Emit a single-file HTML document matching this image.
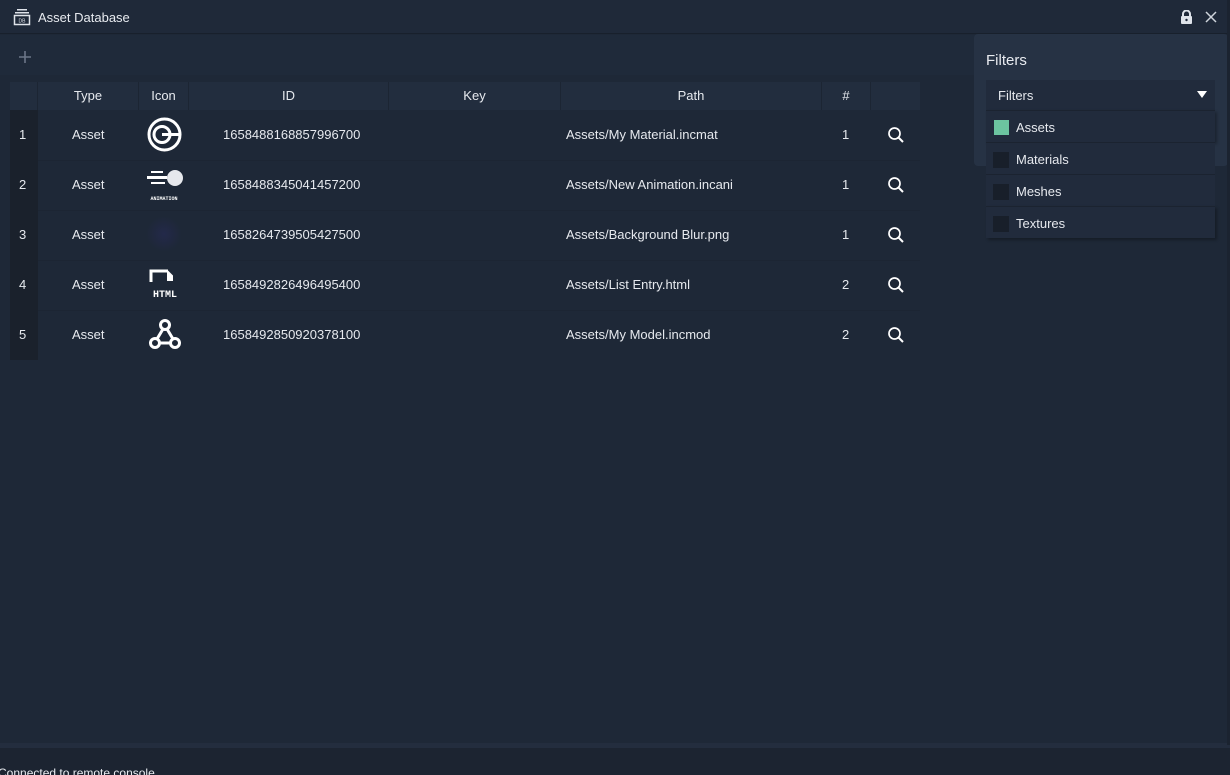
<!DOCTYPE html>
<html style="overflow:hidden;width:1230px;height:775px"><head><meta charset="utf-8"><style>
*{margin:0;padding:0;box-sizing:border-box}
body{width:1230px;height:775px;background:#1e2837;font-family:"Liberation Sans",sans-serif;color:#e6e9ee;font-size:13px;position:relative;overflow:hidden}
.title{position:absolute;left:0;top:0;width:1230px;height:34px;background:#1f2939;border-bottom:1px solid #18202c}
.title span{position:absolute;left:38px;top:10px;font-size:13px;color:#e8ebf0}
.tool{position:absolute;left:0;top:35px;width:1230px;height:40px;background:#1f2a3a}
.table{position:absolute;left:10px;top:82px}
.hdr{position:absolute;top:0;height:28px;background:#222d3e;text-align:center;line-height:28px;font-size:13px;border-right:1px solid #1c2533}
.idx{position:absolute;left:0;top:28px;width:28px;height:250px;background:#1a212c}
.cell{position:absolute;font-size:13px;line-height:16px}
.rowline{position:absolute;left:28px;width:882px;height:1px;background:#1c2533}
.panel{position:absolute;left:974px;top:34px;width:254px;height:132px;background:#263244;border-radius:4px}
.dd{position:absolute;left:986px;top:80px;width:229px;height:30px;background:#212b3c}
.opt{position:absolute;left:986px;width:229px;height:32px;background:#212b3c;border-top:1px solid #1b2330}
.opt .cb{position:absolute;left:7px;top:9px;width:16px;height:16px;background:#181f2a}
.opt span{position:absolute;left:30px;top:9px;font-size:13px}
</style></head><body>
<div class="title">
<svg style="position:absolute;left:13px;top:8px" width="18" height="18" viewBox="0 0 18 18"><rect x="4" y="1" width="10" height="1.5" fill="#dfe3ea"/><rect x="2" y="4" width="14" height="1.5" fill="#dfe3ea"/><rect x="1.5" y="7.5" width="15" height="9" fill="none" stroke="#dfe3ea" stroke-width="1.5"/><text x="9" y="14.5" font-size="5" fill="#dfe3ea" text-anchor="middle" font-family="Liberation Sans">DB</text></svg>
<span>Asset Database</span>
<svg style="position:absolute;left:1180px;top:10px" width="13" height="14" viewBox="0 0 13 14"><path d="M3 6V4a3.5 3.5 0 0 1 7 0v2" fill="none" stroke="#dfe3ea" stroke-width="2"/><rect x="1" y="6" width="11" height="8" rx="1" fill="#dfe3ea"/><circle cx="6.5" cy="10" r="1.2" fill="#1f2939"/></svg>
<svg style="position:absolute;left:1205px;top:11px" width="12" height="12" viewBox="0 0 12 12"><path d="M1 1L11 11M11 1L1 11" stroke="#cfd4dc" stroke-width="1.5"/></svg>
</div>
<div class="tool"><svg style="position:absolute;left:18px;top:15px" width="14" height="14"><path d="M7 1V13M1 7H13" stroke="#6b7688" stroke-width="1.6"/></svg></div>
<div class="table">
<div class="hdr" style="left:0;width:28px"></div>
<div class="hdr" style="left:28px;width:101px">Type</div>
<div class="hdr" style="left:129px;width:50px">Icon</div>
<div class="hdr" style="left:179px;width:200px">ID</div>
<div class="hdr" style="left:379px;width:172px">Key</div>
<div class="hdr" style="left:551px;width:261px">Path</div>
<div class="hdr" style="left:812px;width:49px">#</div>
<div class="hdr" style="left:861px;width:49px;border-right:none"></div>
<div class="idx"></div>
<div class="rowline" style="top:78px"></div><div class="rowline" style="top:128px"></div><div class="rowline" style="top:178px"></div><div class="rowline" style="top:228px"></div>
</div>
<div class="cell" style="left:19px;top:127px">1</div><div class="cell" style="left:72px;top:127px">Asset</div><div class="cell" style="left:223px;top:127px">1658488168857996700</div><div class="cell" style="left:566px;top:127px">Assets/My Material.incmat</div><div class="cell" style="left:842px;top:127px">1</div>
<div class="cell" style="left:19px;top:177px">2</div><div class="cell" style="left:72px;top:177px">Asset</div><div class="cell" style="left:223px;top:177px">1658488345041457200</div><div class="cell" style="left:566px;top:177px">Assets/New Animation.incani</div><div class="cell" style="left:842px;top:177px">1</div>
<div class="cell" style="left:19px;top:227px">3</div><div class="cell" style="left:72px;top:227px">Asset</div><div class="cell" style="left:223px;top:227px">1658264739505427500</div><div class="cell" style="left:566px;top:227px">Assets/Background Blur.png</div><div class="cell" style="left:842px;top:227px">1</div>
<div class="cell" style="left:19px;top:277px">4</div><div class="cell" style="left:72px;top:277px">Asset</div><div class="cell" style="left:223px;top:277px">1658492826496495400</div><div class="cell" style="left:566px;top:277px">Assets/List Entry.html</div><div class="cell" style="left:842px;top:277px">2</div>
<div class="cell" style="left:19px;top:327px">5</div><div class="cell" style="left:72px;top:327px">Asset</div><div class="cell" style="left:223px;top:327px">1658492850920378100</div><div class="cell" style="left:566px;top:327px">Assets/My Model.incmod</div><div class="cell" style="left:842px;top:327px">2</div>
<svg style="position:absolute;left:147px;top:117px" width="36" height="36" viewBox="0 0 36 36"><circle cx="17.5" cy="17.5" r="15.5" fill="none" stroke="#fff" stroke-width="3"/><circle cx="15" cy="17.5" r="8" fill="none" stroke="#fff" stroke-width="3"/><path d="M15 17.5H32" stroke="#fff" stroke-width="3"/><rect x="13" y="12" width="4" height="4" fill="#1e2837"/></svg>
<svg style="position:absolute;left:145px;top:168px" width="40" height="34" viewBox="0 0 40 34"><rect x="6" y="3" width="12" height="2" fill="#fff"/><rect x="2" y="8" width="20" height="3" fill="#fff"/><rect x="6" y="14" width="14" height="2" fill="#fff"/><circle cx="30" cy="10" r="8" fill="#e6e8ec"/><text x="19" y="32" font-size="5" fill="#fff" text-anchor="middle" font-family="Liberation Mono" font-weight="bold">ANIMATION</text></svg>
<div style="position:absolute;left:146px;top:216px;width:36px;height:36px;border-radius:50%;background:radial-gradient(#23294a,#1e2837 70%)"></div>
<svg style="position:absolute;left:148px;top:268px" width="36" height="34" viewBox="0 0 36 34"><path d="M3 14V3H20" fill="none" stroke="#fff" stroke-width="3"/><path d="M19 1.5L25 7.5V13H19Z" fill="#fff"/><text x="17" y="29" font-size="10" fill="#fff" text-anchor="middle" font-family="Liberation Mono" font-weight="bold">HTML</text></svg>
<svg style="position:absolute;left:148px;top:318px" width="34" height="34" viewBox="0 0 34 34"><circle cx="17" cy="7" r="4.5" fill="none" stroke="#fff" stroke-width="3"/><circle cx="7" cy="25" r="4.5" fill="none" stroke="#fff" stroke-width="3"/><circle cx="27" cy="25" r="4.5" fill="none" stroke="#fff" stroke-width="3"/><path d="M15 11L9 21M19 11L25 21M11.5 25H22.5" stroke="#fff" stroke-width="3"/></svg>
<svg style="position:absolute;left:887px;top:126px" width="18" height="18" viewBox="0 0 18 18"><circle cx="7.5" cy="7.5" r="5.5" fill="none" stroke="#fff" stroke-width="1.7"/><path d="M11.5 11.5L16 16" stroke="#fff" stroke-width="2"/></svg>
<svg style="position:absolute;left:887px;top:176px" width="18" height="18" viewBox="0 0 18 18"><circle cx="7.5" cy="7.5" r="5.5" fill="none" stroke="#fff" stroke-width="1.7"/><path d="M11.5 11.5L16 16" stroke="#fff" stroke-width="2"/></svg>
<svg style="position:absolute;left:887px;top:226px" width="18" height="18" viewBox="0 0 18 18"><circle cx="7.5" cy="7.5" r="5.5" fill="none" stroke="#fff" stroke-width="1.7"/><path d="M11.5 11.5L16 16" stroke="#fff" stroke-width="2"/></svg>
<svg style="position:absolute;left:887px;top:276px" width="18" height="18" viewBox="0 0 18 18"><circle cx="7.5" cy="7.5" r="5.5" fill="none" stroke="#fff" stroke-width="1.7"/><path d="M11.5 11.5L16 16" stroke="#fff" stroke-width="2"/></svg>
<svg style="position:absolute;left:887px;top:326px" width="18" height="18" viewBox="0 0 18 18"><circle cx="7.5" cy="7.5" r="5.5" fill="none" stroke="#fff" stroke-width="1.7"/><path d="M11.5 11.5L16 16" stroke="#fff" stroke-width="2"/></svg>
<div class="panel"></div>
<div style="position:absolute;left:986px;top:52px;font-size:15px;color:#e8ebf0">Filters</div>
<div class="dd"><span style="position:absolute;left:12px;top:8px;font-size:13px">Filters</span><svg style="position:absolute;left:211px;top:11px" width="10" height="8"><path d="M0 0H10L5 7Z" fill="#fff"/></svg></div>
<div class="opt" style="top:110px;box-shadow:2px 2px 3px rgba(0,0,0,.3)"><div class="cb" style="background:#6cc4a0;left:8px;top:9px;width:15px;height:15px"></div><span>Assets</span></div>
<div class="opt" style="top:142px"><div class="cb"></div><span>Materials</span></div>
<div class="opt" style="top:174px"><div class="cb"></div><span>Meshes</span></div>
<div class="opt" style="top:206px;box-shadow:2px 2px 3px rgba(0,0,0,.3)"><div class="cb"></div><span>Textures</span></div>
<div style="position:absolute;left:0;top:743px;width:1230px;height:5px;background:#232d3e"></div>
<div style="position:absolute;left:0;top:748px;width:1230px;height:27px;background:#1c2431;overflow:hidden"><div style="position:absolute;left:-2px;top:18px;font-size:12px;color:#e8ebf0;white-space:nowrap">Connected to remote console</div></div>
<div style="position:absolute;left:1227px;top:0;width:3px;height:745px;background:#1b2330"></div>
</body></html>
